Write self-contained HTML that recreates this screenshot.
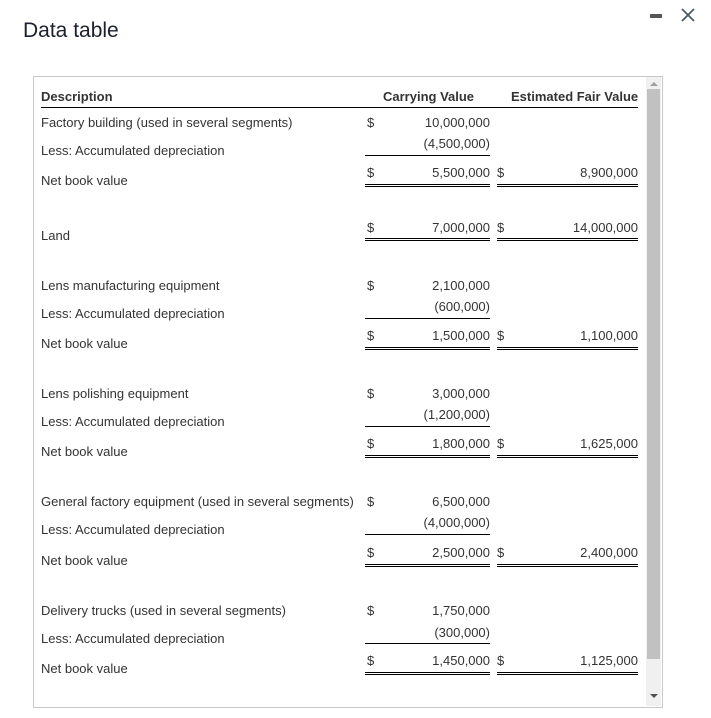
<!DOCTYPE html>
<html><head><style>
body{margin:0;width:711px;height:718px;background:#fff;font-family:"Liberation Sans",Arial,sans-serif;position:relative;overflow:hidden;color:#333}
.t{position:absolute;height:16px;line-height:18px;font-size:13px;white-space:nowrap}
.r{text-align:right}
.h{font-weight:bold;color:#333}
.l{position:absolute;height:1px;background:#000}
.d{position:absolute;height:1px;border-top:1px solid #000;border-bottom:1px solid #000;background:#fff;height:1px}
</style></head><body>
<div style="position:absolute;left:23px;top:19px;font-size:21px;color:#1a2030">Data table</div>
<div style="position:absolute;left:650px;top:14px;width:12px;height:4px;background:#555"></div>
<svg style="position:absolute;left:680px;top:7px" width="16" height="16"><path d="M2 2L14 14M14 2L2 14" stroke="#4a5a6a" stroke-width="1.8"/></svg>
<div style="position:absolute;left:33px;top:76px;width:628px;height:630px;border:1px solid #c8c8c8"></div>
<div style="position:absolute;left:646px;top:77px;width:15px;height:629px;background:#f0f0f0"></div>
<div style="position:absolute;left:647px;top:89px;width:13px;height:570px;background:#c1c1c1"></div>
<div style="position:absolute;left:650px;top:82px;width:0;height:0;border-left:4px solid transparent;border-right:4px solid transparent;border-bottom:4px solid #a0a0a0"></div>
<div style="position:absolute;left:650px;top:694px;width:0;height:0;border-left:4px solid transparent;border-right:4px solid transparent;border-top:4px solid #505050"></div>

<div class="t h" style="left:41px;top:88px">Description</div>
<div class="t h" style="left:383px;top:88px">Carrying Value</div>
<div class="t h" style="left:511px;top:88px">Estimated Fair Value</div>
<div class="l" style="left:41px;top:107px;width:597px"></div>

<div class="t" style="left:41px;top:114px">Factory building (used in several segments)</div>
<div class="t" style="left:41px;top:142px">Less: Accumulated depreciation</div>
<div class="t" style="left:41px;top:172px">Net book value</div>
<div class="t" style="left:367px;top:114px">$</div><div class="t r" style="left:390px;width:100px;top:114px">10,000,000</div>
<div class="t r" style="left:390px;width:100px;top:135px">(4,500,000)</div>
<div class="l" style="left:365px;top:155px;width:125px"></div>
<div class="t" style="left:367px;top:164px">$</div><div class="t r" style="left:390px;width:100px;top:164px">5,500,000</div>
<div class="t" style="left:497px;top:164px">$</div><div class="t r" style="left:538px;width:100px;top:164px">8,900,000</div>
<div class="d" style="left:365px;top:184px;width:125px"></div><div class="d" style="left:497px;top:184px;width:141px"></div>

<div class="t" style="left:41px;top:227px">Land</div>
<div class="t" style="left:367px;top:219px">$</div><div class="t r" style="left:390px;width:100px;top:219px">7,000,000</div>
<div class="t" style="left:497px;top:219px">$</div><div class="t r" style="left:538px;width:100px;top:219px">14,000,000</div>
<div class="d" style="left:365px;top:238px;width:125px"></div><div class="d" style="left:497px;top:238px;width:141px"></div>

<div class="t" style="left:41px;top:277px">Lens manufacturing equipment</div>
<div class="t" style="left:41px;top:305px">Less: Accumulated depreciation</div>
<div class="t" style="left:41px;top:335px">Net book value</div>
<div class="t" style="left:367px;top:277px">$</div><div class="t r" style="left:390px;width:100px;top:277px">2,100,000</div>
<div class="t r" style="left:390px;width:100px;top:298px">(600,000)</div>
<div class="l" style="left:365px;top:318px;width:125px"></div>
<div class="t" style="left:367px;top:327px">$</div><div class="t r" style="left:390px;width:100px;top:327px">1,500,000</div>
<div class="t" style="left:497px;top:327px">$</div><div class="t r" style="left:538px;width:100px;top:327px">1,100,000</div>
<div class="d" style="left:365px;top:347px;width:125px"></div><div class="d" style="left:497px;top:347px;width:141px"></div>

<div class="t" style="left:41px;top:385px">Lens polishing equipment</div>
<div class="t" style="left:41px;top:413px">Less: Accumulated depreciation</div>
<div class="t" style="left:41px;top:443px">Net book value</div>
<div class="t" style="left:367px;top:385px">$</div><div class="t r" style="left:390px;width:100px;top:385px">3,000,000</div>
<div class="t r" style="left:390px;width:100px;top:406px">(1,200,000)</div>
<div class="l" style="left:365px;top:426px;width:125px"></div>
<div class="t" style="left:367px;top:435px">$</div><div class="t r" style="left:390px;width:100px;top:435px">1,800,000</div>
<div class="t" style="left:497px;top:435px">$</div><div class="t r" style="left:538px;width:100px;top:435px">1,625,000</div>
<div class="d" style="left:365px;top:455px;width:125px"></div><div class="d" style="left:497px;top:455px;width:141px"></div>

<div class="t" style="left:41px;top:493px">General factory equipment (used in several segments)</div>
<div class="t" style="left:41px;top:521px">Less: Accumulated depreciation</div>
<div class="t" style="left:41px;top:552px">Net book value</div>
<div class="t" style="left:367px;top:493px">$</div><div class="t r" style="left:390px;width:100px;top:493px">6,500,000</div>
<div class="t r" style="left:390px;width:100px;top:514px">(4,000,000)</div>
<div class="l" style="left:365px;top:534px;width:125px"></div>
<div class="t" style="left:367px;top:544px">$</div><div class="t r" style="left:390px;width:100px;top:544px">2,500,000</div>
<div class="t" style="left:497px;top:544px">$</div><div class="t r" style="left:538px;width:100px;top:544px">2,400,000</div>
<div class="d" style="left:365px;top:564px;width:125px"></div><div class="d" style="left:497px;top:564px;width:141px"></div>

<div class="t" style="left:41px;top:602px">Delivery trucks (used in several segments)</div>
<div class="t" style="left:41px;top:630px">Less: Accumulated depreciation</div>
<div class="t" style="left:41px;top:660px">Net book value</div>
<div class="t" style="left:367px;top:602px">$</div><div class="t r" style="left:390px;width:100px;top:602px">1,750,000</div>
<div class="t r" style="left:390px;width:100px;top:624px">(300,000)</div>
<div class="l" style="left:365px;top:643px;width:125px"></div>
<div class="t" style="left:367px;top:652px">$</div><div class="t r" style="left:390px;width:100px;top:652px">1,450,000</div>
<div class="t" style="left:497px;top:652px">$</div><div class="t r" style="left:538px;width:100px;top:652px">1,125,000</div>
<div class="d" style="left:365px;top:672px;width:125px"></div><div class="d" style="left:497px;top:672px;width:141px"></div>
</body></html>
